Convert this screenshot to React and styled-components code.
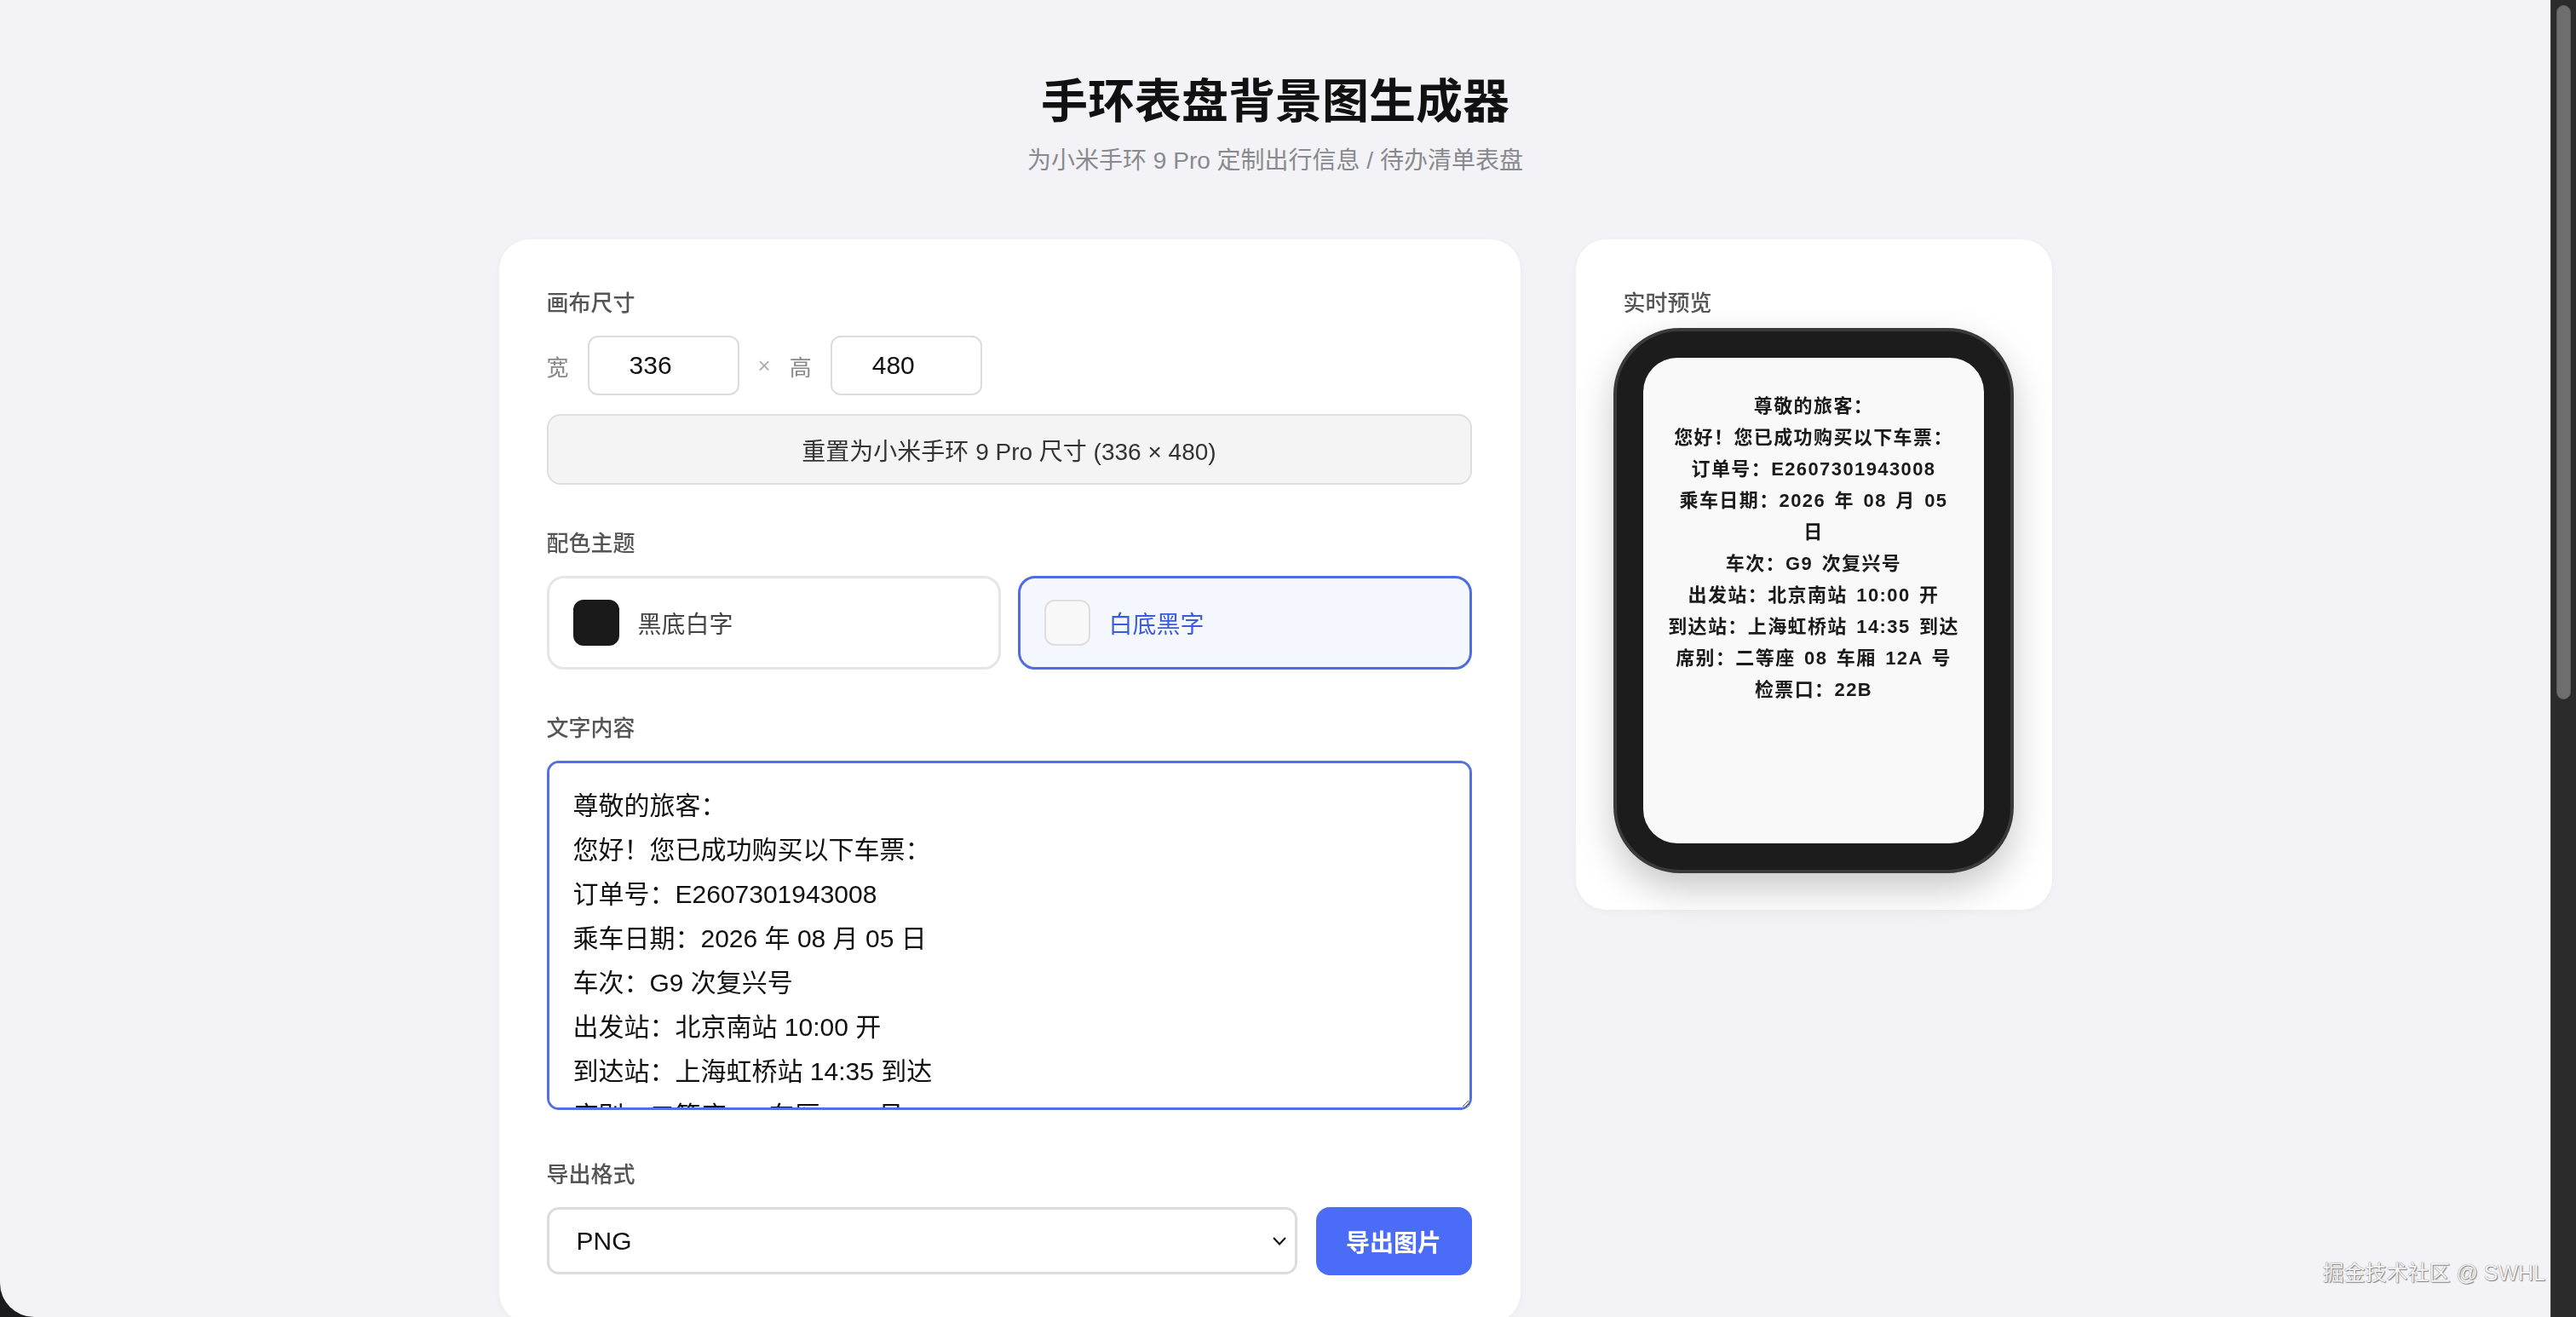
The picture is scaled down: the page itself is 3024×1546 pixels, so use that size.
import React from 'react';
import styled, { createGlobalStyle } from 'styled-components';

const GlobalStyle = createGlobalStyle`
  html, body { margin: 0; padding: 0; height: 100%; overflow: hidden; background: #1b1b1d; }
  body { font-family: "Liberation Sans", "Noto Sans CJK SC", sans-serif; }
  #root { height: 100%; }
  *, *::before, *::after { box-sizing: border-box; }
`;

const FONT = `"Liberation Sans", "Noto Sans CJK SC", sans-serif`;

const Shell = styled.div`
  display: flex;
  height: 100vh;
  background: #1b1b1d;
`;

const Page = styled.main`
  position: relative;
  flex: 1;
  min-width: 0;
  background: #f2f2f7;
  overflow: hidden;
  border-bottom-left-radius: 40px;
  padding-top: 84px;
  display: flex;
  flex-direction: column;
  align-items: center;
`;

const ScrollTrack = styled.div`
  width: 30px;
  flex: none;
  background: #2b2b2b;
  border-left: 1px solid #3a3a3a;
  padding: 6px 6px 0 6px;
`;

const ScrollThumb = styled.div`
  height: 815px;
  border-radius: 9px;
  background: #6e6e6e;
  border: 1px solid #5c5c5c;
`;

const Title = styled.h1`
  margin: 0;
  font-size: 55px;
  line-height: 70px;
  font-weight: 700;
  color: #111;
`;

const Subtitle = styled.p`
  margin: 14px 0 0;
  font-size: 28px;
  line-height: 42px;
  color: #8a8a8e;
`;

const Columns = styled.div`
  display: flex;
  align-items: flex-start;
  gap: 65px;
  margin-top: 71px;
`;

const Card = styled.section`
  background: #fff;
  border-radius: 36px;
  box-shadow: 0 2px 10px rgba(0, 0, 0, 0.035);
`;

const EditorCard = styled(Card)`
  width: 1199px;
  padding: 56px 57px 56px 56px;
`;

const PreviewCard = styled(Card)`
  width: 559px;
  padding: 56px 44px 43px;
  display: flex;
  flex-direction: column;
  align-items: center;
`;

const Section = styled.div`
  padding-bottom: ${(p) => p.$extra || 0}px;
  & + & { margin-top: 50px; }
`;

const Label = styled.div`
  font-size: 26px;
  line-height: 39px;
  font-weight: 500;
  color: #555;
  margin-bottom: 18px;
`;

const PreviewLabel = styled(Label)`
  align-self: stretch;
  margin: 0 0 9px 12px;
`;

const SizeRow = styled.div`
  display: flex;
  align-items: center;
  gap: 22px;
`;

const DimText = styled.span`
  font-size: 26px;
  color: ${(p) => (p.$muted ? '#b0b0b0' : '#888')};
`;

const NumberInput = styled.input`
  width: 178px;
  height: 70px;
  border: 2px solid #dcdcdc;
  border-radius: 12px;
  padding: 0 0 0 47px;
  font-family: ${FONT};
  font-size: 30px;
  color: #111;
  background: #fff;
  outline: none;
`;

const ResetButton = styled.button`
  display: block;
  width: 100%;
  height: 83px;
  margin-top: 22px;
  background: #f4f4f4;
  border: 2px solid #dedede;
  border-radius: 16px;
  font-family: ${FONT};
  font-size: 28px;
  color: #333;
  cursor: pointer;
`;

const ThemeGrid = styled.div`
  display: grid;
  grid-template-columns: 1fr 1fr;
  gap: 20px;
`;

const ThemeOption = styled.button`
  height: 110px;
  display: flex;
  align-items: center;
  gap: 22px;
  padding: 0 0 0 28px;
  border: 3px solid ${(p) => (p.$active ? '#4f6ce0' : '#e6e6e6')};
  border-radius: 20px;
  background: ${(p) => (p.$active ? '#f5f7ff' : '#fff')};
  font-family: ${FONT};
  font-size: 28px;
  color: ${(p) => (p.$active ? '#3b5bdb' : '#444')};
  cursor: pointer;
`;

const Swatch = styled.span`
  width: 54px;
  height: 54px;
  border-radius: 12px;
  background: ${(p) => p.$color};
  border: 2px solid ${(p) => (p.$light ? '#dedede' : p.$color)};
`;

const TextArea = styled.textarea`
  display: block;
  width: 100%;
  height: 410px;
  border: 3px solid #5470e0;
  border-radius: 14px;
  padding: 24px 28px;
  font-family: ${FONT};
  font-size: 30px;
  line-height: 52px;
  color: #111;
  background: #fff;
  outline: none;
  &::-webkit-scrollbar { width: 24px; }
  &::-webkit-scrollbar-track { background: #fafafa; border-left: 1px solid #ececec; }
  &::-webkit-scrollbar-thumb {
    background: #c1c1c1;
    border-radius: 12px;
    border: 4px solid transparent;
    background-clip: padding-box;
  }
`;

const ExportRow = styled.div`
  display: flex;
  gap: 22px;
`;

const chevron =
  "data:image/svg+xml;utf8,<svg xmlns='http://www.w3.org/2000/svg' width='18' height='12' viewBox='0 0 18 12'><path d='M2 2 L9 9.5 L16 2' fill='none' stroke='%23111' stroke-width='2'/></svg>";

const Select = styled.select`
  flex: 1;
  height: 79px;
  border: 3px solid #dcdcdc;
  border-radius: 14px;
  padding: 0 0 0 32px;
  font-family: ${FONT};
  font-size: 30px;
  color: #111;
  background: #fff url("${chevron}") no-repeat right 9px center / 18px 12px;
  appearance: none;
  outline: none;
`;

const ExportButton = styled.button`
  width: 183px;
  height: 80px;
  border: none;
  border-radius: 16px;
  background: #4a6cf7;
  color: #fff;
  font-family: ${FONT};
  font-size: 28px;
  font-weight: 600;
  cursor: pointer;
`;

const WatchFrame = styled.div`
  width: 470px;
  height: 640px;
  padding: 31px;
  background: #1c1c1c;
  border: 4px solid #3a3a3a;
  border-radius: 78px;
  box-shadow: 0 18px 44px rgba(0, 0, 0, 0.22);
`;

const Screen = styled.div`
  width: 400px;
  height: 570px;
  border-radius: 40px;
  background: ${(p) => p.$bg};
  color: ${(p) => p.$fg};
  padding: 38px 26px;
  text-align: center;
  font-family: ${FONT};
  font-weight: 700;
  font-size: 22px;
  letter-spacing: 1.4px;
  word-spacing: 3px;
  line-height: 37px;
  overflow: hidden;
`;

const ScreenLine = styled.div``;

const Watermark = styled.div`
  position: absolute;
  right: 6px;
  bottom: 36px;
  font-size: 25px;
  color: #f5f5f5;
  text-shadow: 0 0 1px #666, 1px 1px 1px rgba(0, 0, 0, 0.45);
`;

const lines = [
  '尊敬的旅客：',
  '您好！您已成功购买以下车票：',
  '订单号：E2607301943008',
  '乘车日期：2026 年 08 月 05 日',
  '车次：G9 次复兴号',
  '出发站：北京南站 10:00 开',
  '到达站：上海虹桥站 14:35 到达',
  '席别：二等座 08 车厢 12A 号',
  '检票口：22B',
];

export default function App() {
  return (
    <>
      <GlobalStyle />
      <Shell>
        <Page>
          <Title>手环表盘背景图生成器</Title>
          <Subtitle>为小米手环 9 Pro 定制出行信息 / 待办清单表盘</Subtitle>
          <Columns>
            <EditorCard>
              <Section>
                <Label>画布尺寸</Label>
                <SizeRow>
                  <DimText>宽</DimText>
                  <NumberInput defaultValue="336" />
                  <DimText $muted>×</DimText>
                  <DimText>高</DimText>
                  <NumberInput defaultValue="480" />
                </SizeRow>
                <ResetButton>重置为小米手环 9 Pro 尺寸 (336 × 480)</ResetButton>
              </Section>
              <Section>
                <Label>配色主题</Label>
                <ThemeGrid>
                  <ThemeOption>
                    <Swatch $color="#1a1a1a" />
                    黑底白字
                  </ThemeOption>
                  <ThemeOption $active>
                    <Swatch $color="#f8f8f8" $light />
                    白底黑字
                  </ThemeOption>
                </ThemeGrid>
              </Section>
              <Section $extra={7}>
                <Label>文字内容</Label>
                <TextArea defaultValue={lines.join('\n')} />
              </Section>
              <Section>
                <Label>导出格式</Label>
                <ExportRow>
                  <Select defaultValue="png">
                    <option value="png">PNG</option>
                    <option value="jpg">JPG</option>
                  </Select>
                  <ExportButton>导出图片</ExportButton>
                </ExportRow>
              </Section>
            </EditorCard>
            <PreviewCard>
              <PreviewLabel>实时预览</PreviewLabel>
              <WatchFrame>
                <Screen $bg="#f9f9f9" $fg="#1a1a1a">
                  {lines.map((l) => (
                    <ScreenLine key={l}>{l}</ScreenLine>
                  ))}
                </Screen>
              </WatchFrame>
            </PreviewCard>
          </Columns>
          <Watermark>掘金技术社区 @ SWHL</Watermark>
        </Page>
        <ScrollTrack>
          <ScrollThumb />
        </ScrollTrack>
      </Shell>
    </>
  );
}
